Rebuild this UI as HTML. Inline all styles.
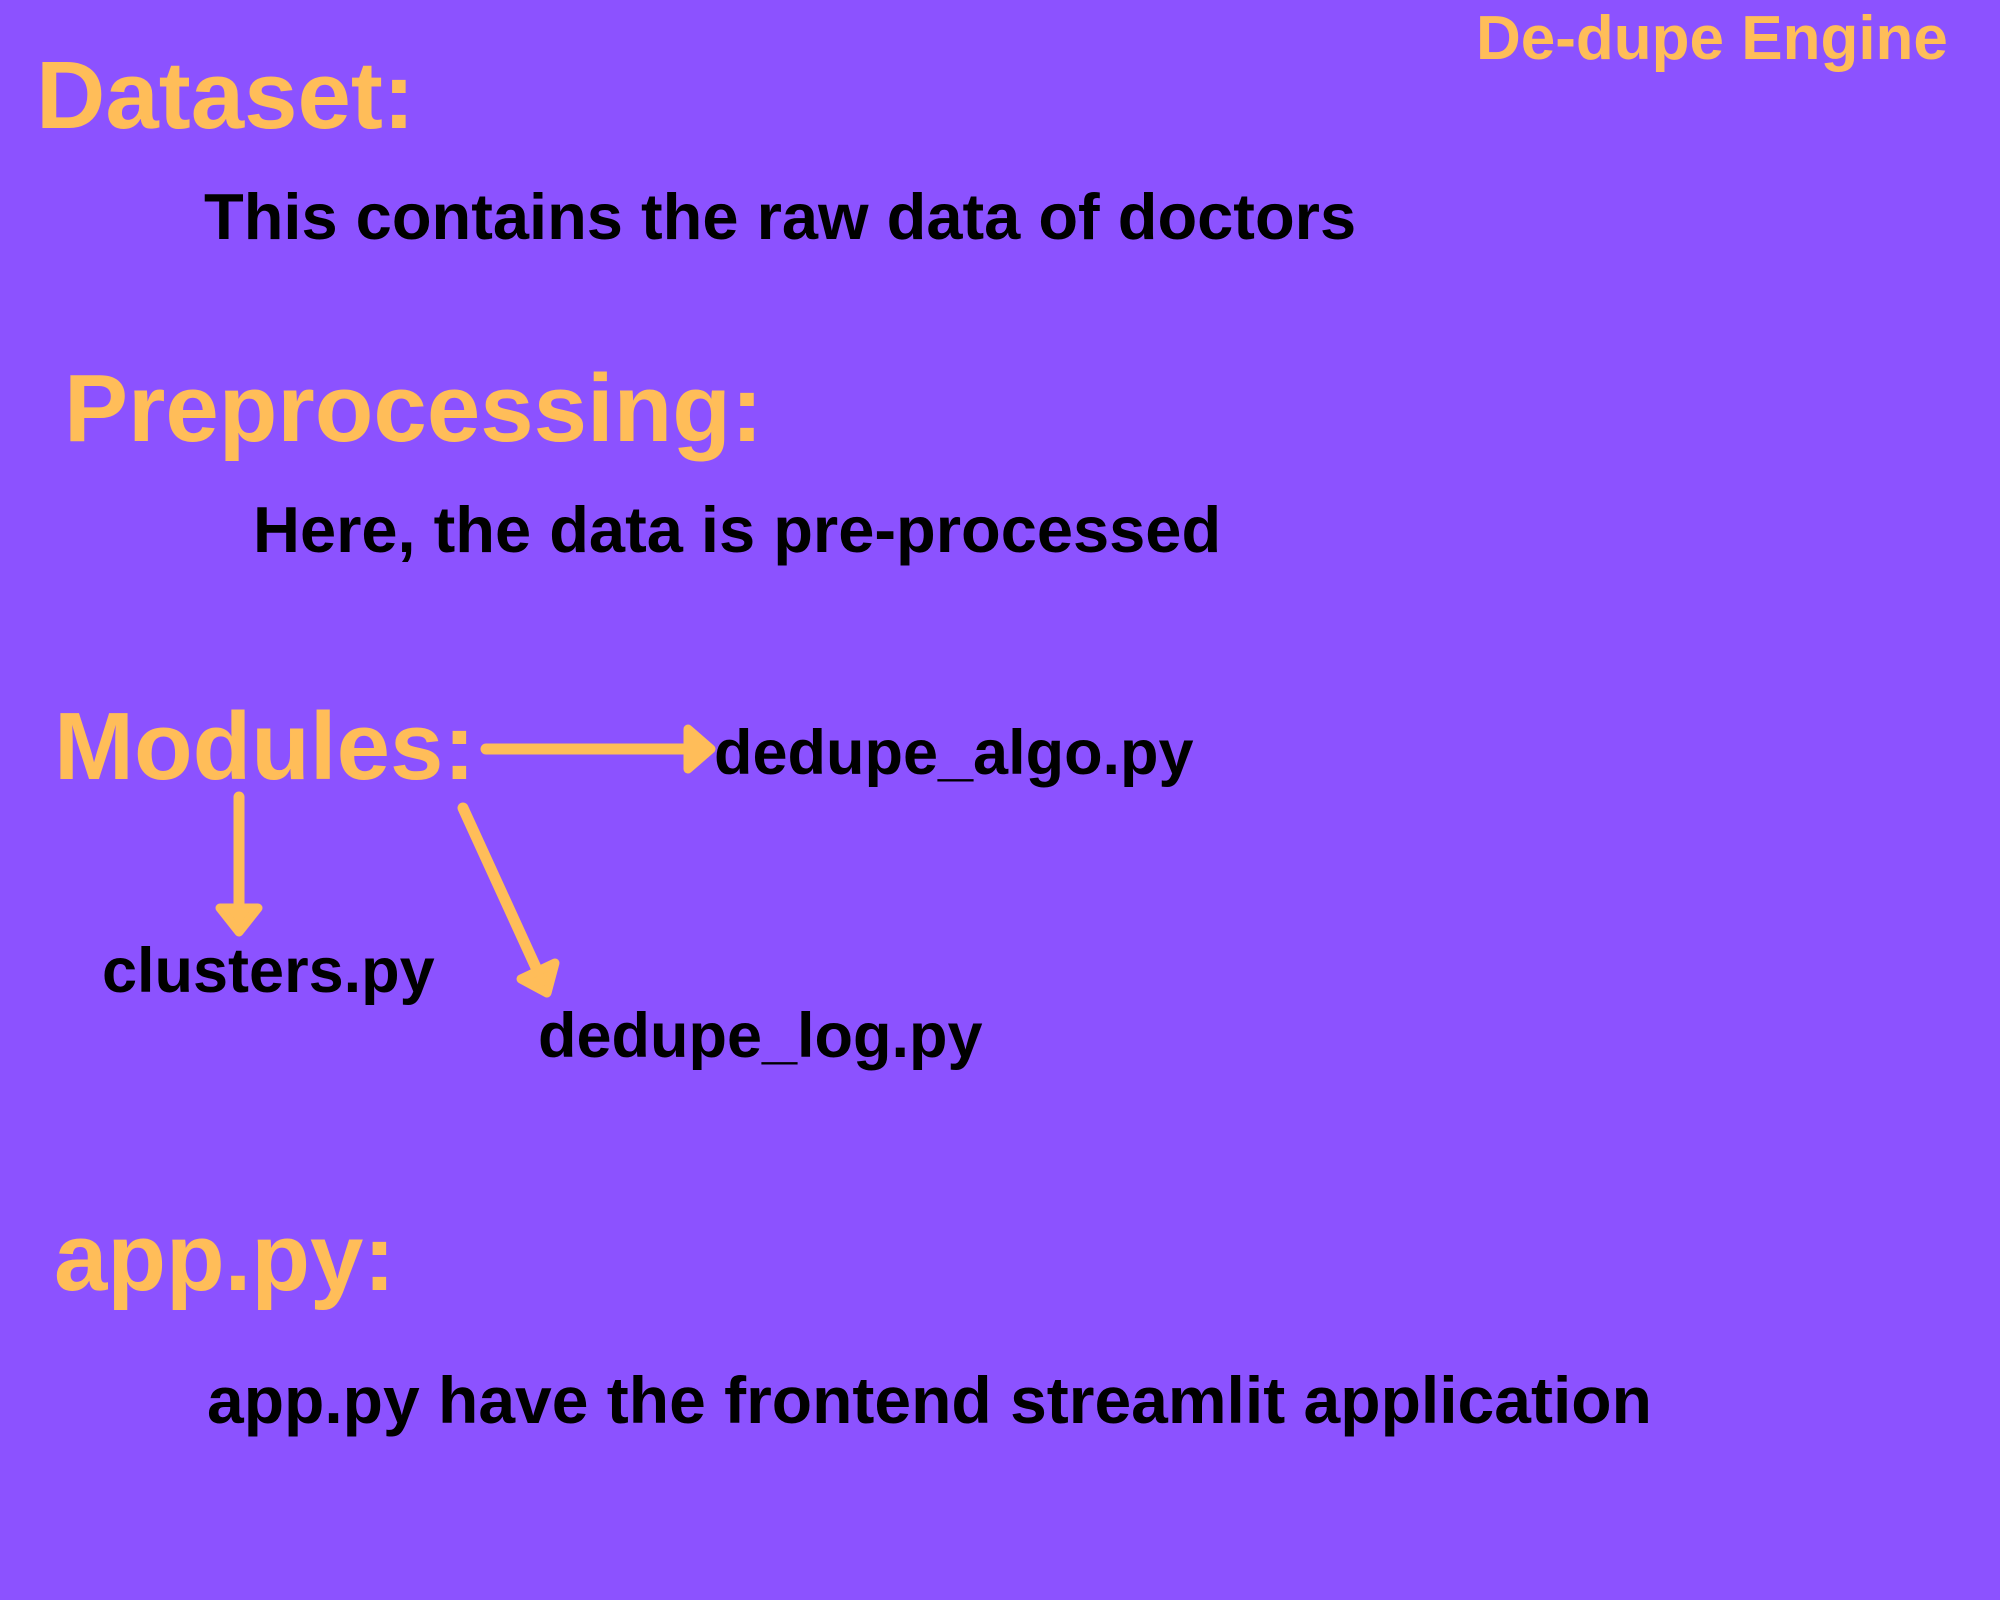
<!DOCTYPE html>
<html><head><meta charset="utf-8"><style>
html,body{margin:0;padding:0}
body{width:2000px;height:1600px;background:#8C52FF;position:relative;overflow:hidden;font-family:"Liberation Sans",sans-serif;font-weight:bold}
.t{position:absolute;white-space:nowrap;line-height:1}
.h{color:#FFBD59;font-size:96px}
.b{color:#000;font-size:65px}
</style></head><body>
<div class="t" style="color:#FFBD59;font-size:62px;left:1476px;top:8px">De-dupe Engine</div>
<div class="t h" style="left:36px;top:48px">Dataset:</div>
<div class="t b" style="left:204px;top:184px">This contains the raw data of doctors</div>
<div class="t h" style="left:64px;top:361px">Preprocessing:</div>
<div class="t b" style="left:253px;top:497px">Here, the data is pre-processed</div>
<div class="t h" style="left:54px;top:699px">Modules:</div>
<div class="t b" style="left:714px;top:722px;font-size:63px">dedupe_algo.py</div>
<div class="t b" style="left:102px;top:940px;font-size:63px">clusters.py</div>
<div class="t b" style="left:538px;top:1005px;font-size:63px">dedupe_log.py</div>
<div class="t h" style="left:54px;top:1210px">app.py:</div>
<div class="t b" style="left:207px;top:1367px;font-size:66px">app.py have the frontend streamlit application</div>
<svg width="2000" height="1600" style="position:absolute;left:0;top:0" fill="#FFBD59" stroke="#FFBD59" stroke-linecap="round" stroke-linejoin="round">
<line x1="486" y1="749" x2="690" y2="749" stroke-width="11"/>
<polygon points="688,729 711,749 688,769" stroke-width="9"/>
<line x1="239" y1="797" x2="239" y2="910" stroke-width="11"/>
<polygon points="220,908 258,908 239,932" stroke-width="9"/>
<line x1="463" y1="808" x2="538" y2="972" stroke-width="11"/>
<polygon points="521,979 555,963 547,993" stroke-width="9"/>
</svg>
</body></html>
